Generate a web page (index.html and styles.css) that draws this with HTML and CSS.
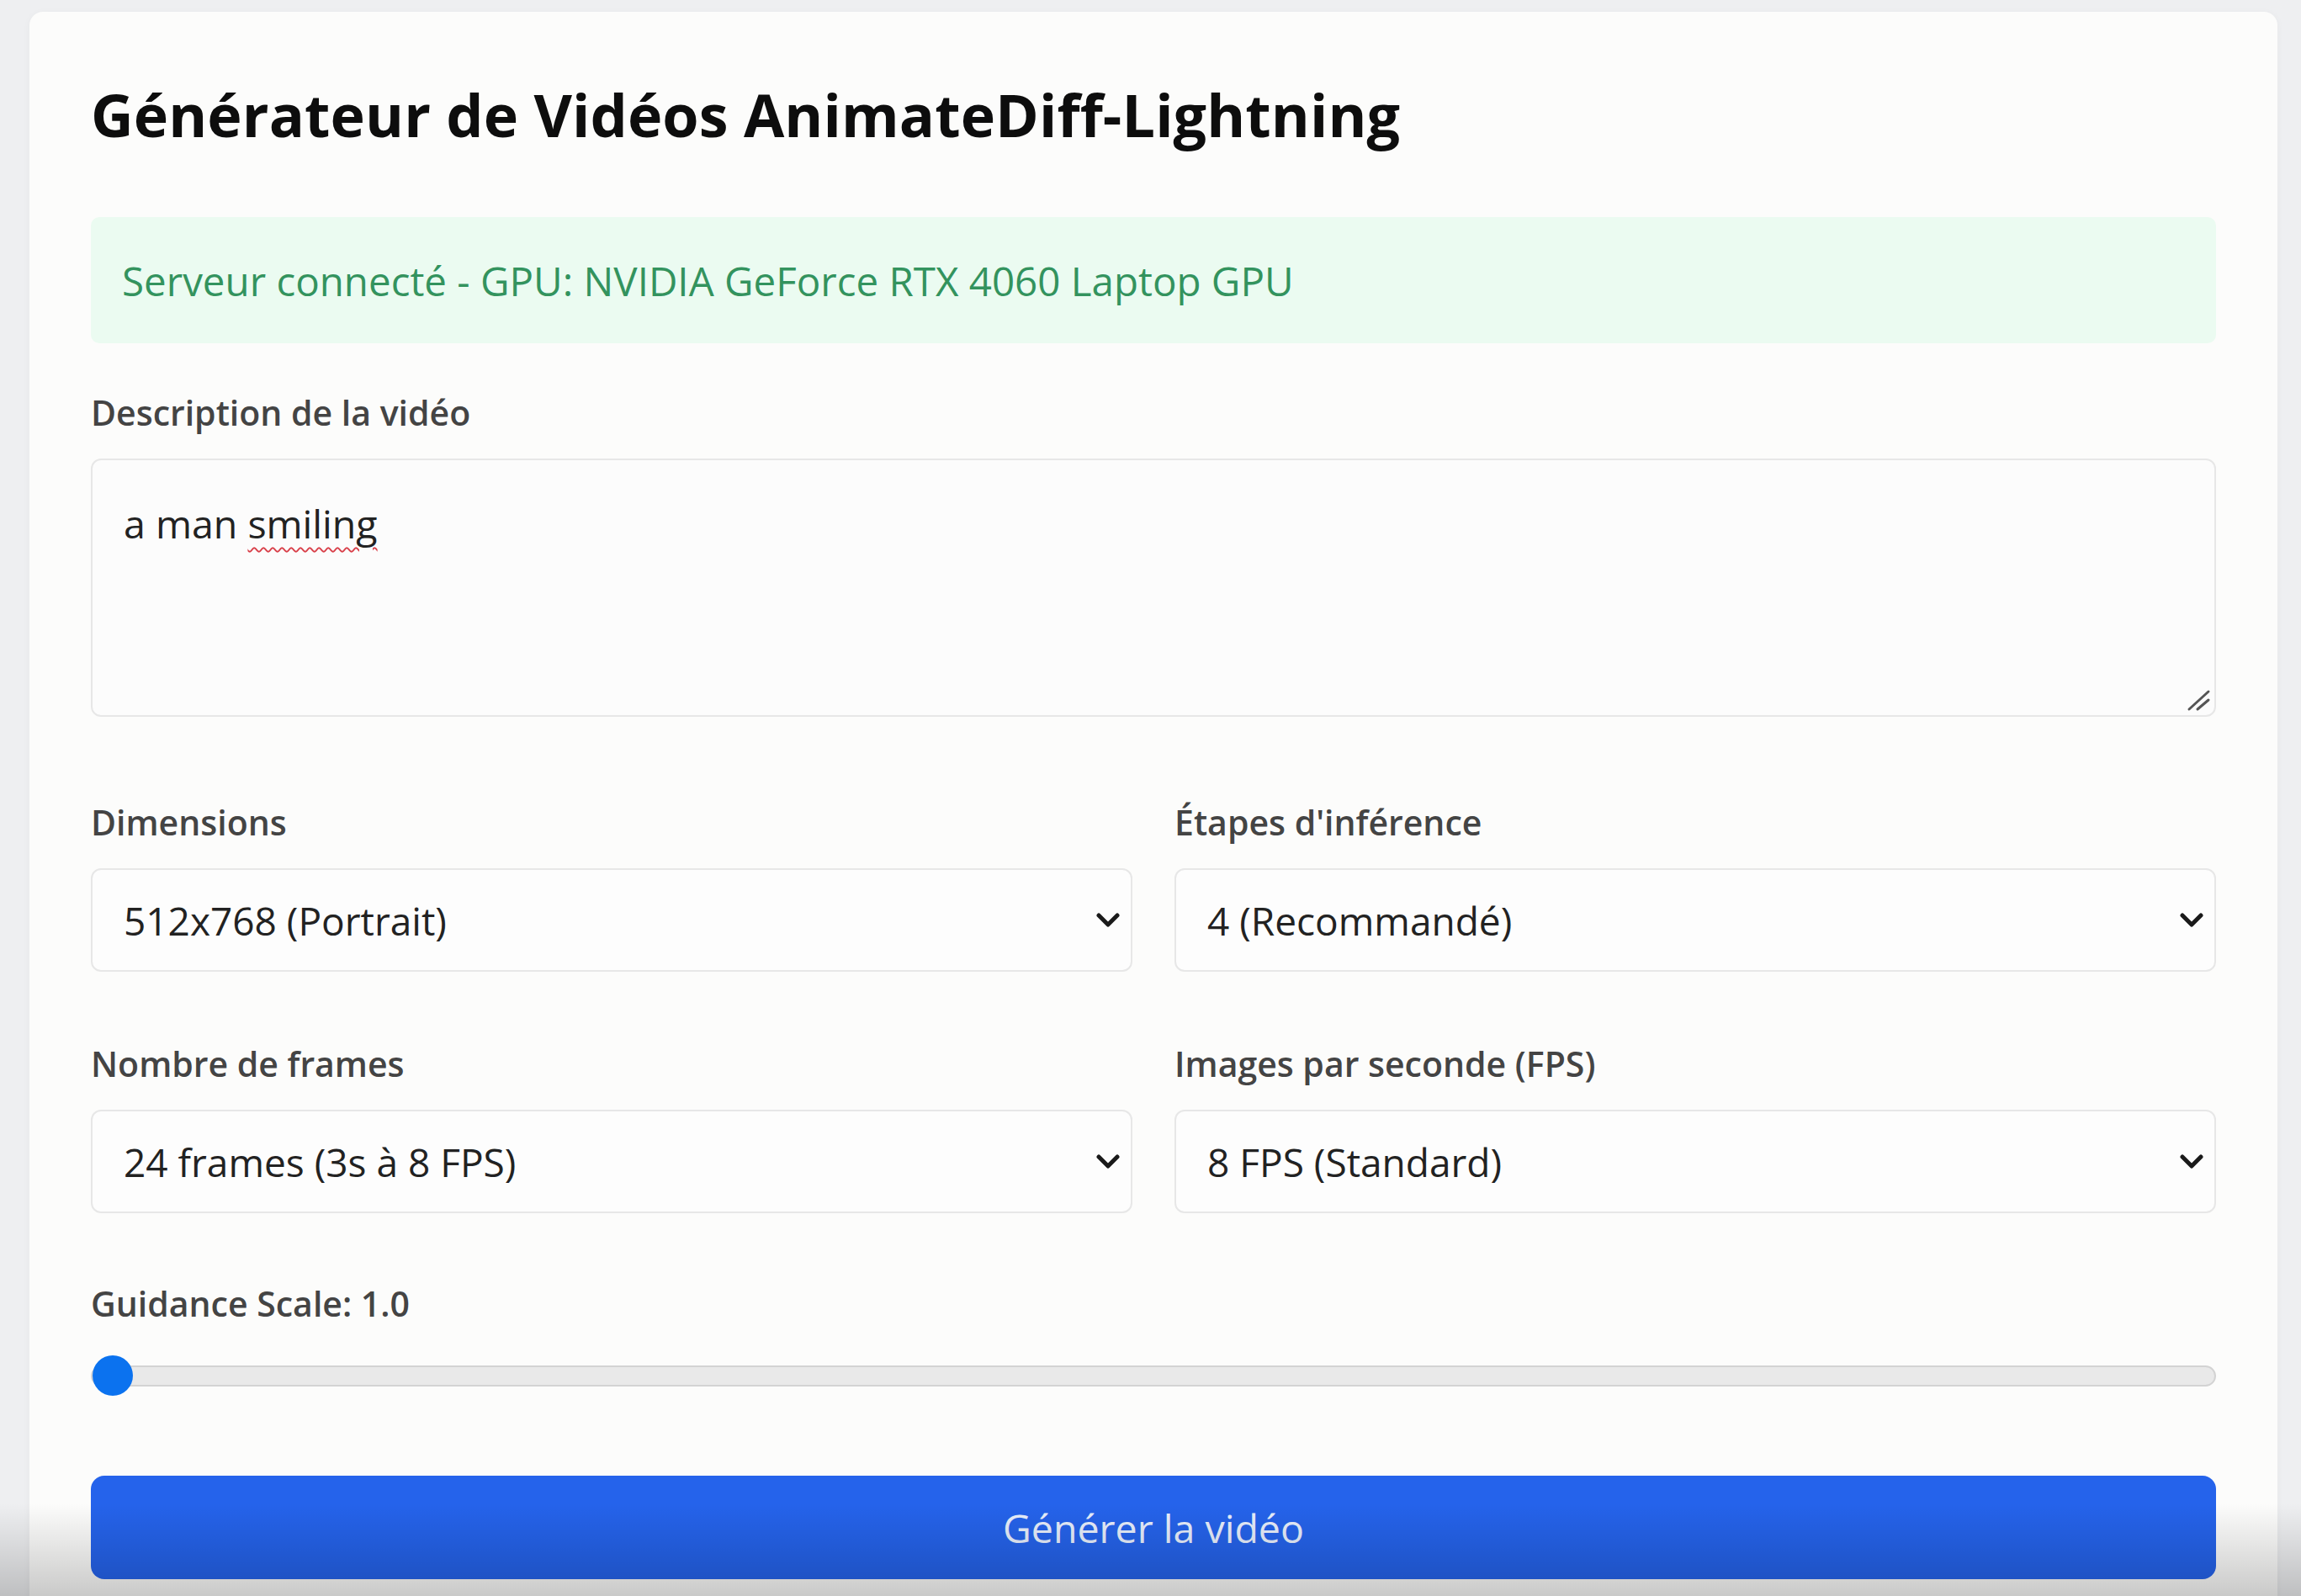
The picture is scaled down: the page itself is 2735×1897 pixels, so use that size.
FILE: index.html
```html
<!DOCTYPE html>
<html lang="fr">
<head>
<meta charset="utf-8">
<title>Générateur de Vidéos AnimateDiff-Lightning</title>
<link rel="stylesheet" href="styles.css">
</head>
<body>
<main class="card">
  <h1 class="title">Générateur de Vidéos AnimateDiff-Lightning</h1>
  <div class="status">Serveur connecté - GPU: NVIDIA GeForce RTX 4060 Laptop GPU</div>

  <div class="field">
    <label class="label">Description de la vidéo</label>
    <div class="textarea">
      <span>a man <span class="spell">smiling</span></span>
      <svg class="grip" width="30" height="30" viewBox="0 0 30 30"><path d="M4 27 L27 6 M14 27 L27 16" stroke="#555" stroke-width="3" stroke-linecap="round" fill="none"/></svg>
    </div>
  </div>

  <div class="grid">
    <div class="field">
      <label class="label">Dimensions</label>
      <div class="select"><span>512x768 (Portrait)</span><svg class="chev" width="30" height="18" viewBox="0 0 30 18"><path d="M4 3 L15 14 L26 3" stroke="#1a1a1a" stroke-width="5" fill="none" stroke-linecap="round" stroke-linejoin="round"/></svg></div>
    </div>
    <div class="field">
      <label class="label">Étapes d'inférence</label>
      <div class="select"><span>4 (Recommandé)</span><svg class="chev" width="30" height="18" viewBox="0 0 30 18"><path d="M4 3 L15 14 L26 3" stroke="#1a1a1a" stroke-width="5" fill="none" stroke-linecap="round" stroke-linejoin="round"/></svg></div>
    </div>
    <div class="field">
      <label class="label">Nombre de frames</label>
      <div class="select"><span>24 frames (3s à 8 FPS)</span><svg class="chev" width="30" height="18" viewBox="0 0 30 18"><path d="M4 3 L15 14 L26 3" stroke="#1a1a1a" stroke-width="5" fill="none" stroke-linecap="round" stroke-linejoin="round"/></svg></div>
    </div>
    <div class="field">
      <label class="label">Images par seconde (FPS)</label>
      <div class="select"><span>8 FPS (Standard)</span><svg class="chev" width="30" height="18" viewBox="0 0 30 18"><path d="M4 3 L15 14 L26 3" stroke="#1a1a1a" stroke-width="5" fill="none" stroke-linecap="round" stroke-linejoin="round"/></svg></div>
    </div>
  </div>

  <div class="field range-field">
    <label class="label">Guidance Scale: 1.0</label>
    <input class="range" type="range" min="1" max="20" step="0.5" value="1">
  </div>

  <button class="btn">Générer la vidéo</button>
</main>
<div class="shade"></div>
</body>
</html>
```

FILE: styles.css
```css
html, body {
  margin: 0;
  padding: 0;
}
body {
  background: #eeeff1;
  font-family: "Open Sans", "Noto Sans", sans-serif;
  height: 1897px;
  overflow: hidden;
  position: relative;
}
.card {
  margin: 14px 28px 0 35px;
  background: #fcfcfb;
  border-radius: 16px;
  padding: 81px 73px 60px 73px;
  box-shadow: 0 2px 10px rgba(0,0,0,0.04);
}
.title {
  margin: 0 0 81px 0;
  font-size: 70px;
  line-height: 82px;
  font-weight: 700;
  color: #0d0d0d;
  letter-spacing: 0.1px;
}
.status {
  height: 150px;
  box-sizing: border-box;
  background: #ebfbf1;
  border-radius: 10px;
  padding: 0 37px;
  display: flex;
  align-items: center;
  color: #33935e;
  font-size: 47.5px;
  line-height: 1.2;
}
.field {
  display: flex;
  flex-direction: column;
}
.label {
  font-size: 41px;
  line-height: 50px;
  font-weight: 600;
  color: #444;
  margin-bottom: 30px;
}
.status + .field {
  margin-top: 57px;
}
.textarea {
  position: relative;
  height: 307px;
  box-sizing: border-box;
  border: 2px solid #e7e7e7;
  border-radius: 12px;
  background: #fcfcfc;
  padding: 42px 37px;
  font-size: 46.5px;
  line-height: 66px;
  color: #222;
}
.spell {
  text-decoration: underline wavy #d9404a;
  text-decoration-thickness: 2px;
  text-underline-offset: 10px;
}
.grip {
  position: absolute;
  right: 4px;
  bottom: 4px;
}
.grid {
  display: grid;
  grid-template-columns: 1fr 1fr;
  column-gap: 50px;
  row-gap: 84px;
  margin-top: 100px;
}
.select {
  height: 123px;
  box-sizing: border-box;
  border: 2px solid #e7e7e7;
  border-radius: 12px;
  background: #fdfdfd;
  padding: 0 12px 0 37px;
  display: flex;
  align-items: center;
  justify-content: space-between;
  font-size: 46px;
  color: #222;
}
.range-field {
  margin-top: 82px;
}
.range-field .label {
  margin-bottom: 37px;
}
.range {
  -webkit-appearance: none;
  appearance: none;
  width: 100%;
  height: 48px;
  margin: 0;
  background: transparent;
}
.range::-webkit-slider-runnable-track {
  height: 25px;
  background: #e9e9e9;
  border: 2px solid #d3d3d3;
  border-radius: 13px;
  box-sizing: border-box;
}
.range::-webkit-slider-thumb {
  -webkit-appearance: none;
  appearance: none;
  width: 48px;
  height: 48px;
  border-radius: 50%;
  background: #0b72ef;
  border: none;
  margin-top: -13.5px;
}
.btn {
  display: block;
  width: 100%;
  margin-top: 95px;
  height: 123px;
  border: none;
  border-radius: 16px;
  background: #2563eb;
  color: #e8effc;
  font-family: "Open Sans", "Noto Sans", sans-serif;
  font-size: 46.5px;
}
.shade {
  position: absolute;
  left: 0;
  right: 0;
  bottom: 0;
  height: 110px;
  background: linear-gradient(to bottom, rgba(0,0,0,0), rgba(0,0,0,0.2));
  pointer-events: none;
}
```
